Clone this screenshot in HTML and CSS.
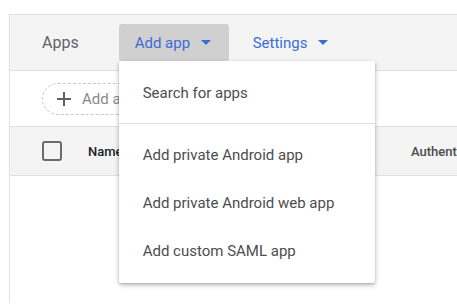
FILE: index.html
```html
<!DOCTYPE html>
<html lang="en">
<head>
  <meta charset="UTF-8" />
  <title>Apps</title>
  <link rel="stylesheet" href="styles.css">
</head>
<body>

  <div class="panel">

    <!-- ───── header bar ───── -->
    <div class="header">
      <span class="title">Apps</span>

      <div class="menu-wrap">
        <button class="drop-btn active">Add app <span class="caret"></span></button>

        <!-- open dropdown -->
        <div class="menu">
          <div class="menu-item">Search for apps</div>
          <div class="menu-divider"></div>
          <div class="menu-item">Add private Android app</div>
          <div class="menu-item">Add private Android web app</div>
          <div class="menu-item">Add custom SAML app</div>
        </div>
      </div>

      <button class="drop-btn">Settings <span class="caret"></span></button>
    </div>

    <!-- ───── toolbar ───── -->
    <div class="toolbar">
      <div class="filter-chip">
        <svg class="plus" width="14" height="14" viewBox="0 0 14 14">
          <path d="M7 0v14M0 7h14" stroke="#616161" stroke-width="2" />
        </svg>
        <span>Add a filter</span>
      </div>
    </div>

    <!-- ───── table header ───── -->
    <div class="table-head">
      <span class="checkbox"></span>
      <span class="col col-name">Name</span>
      <span class="col col-auth">Authentication</span>
    </div>

    <div class="table-body"></div>
  </div>

</body>
</html>
```

FILE: styles.css
```css
:root {
  --c-blue:    #3d6cd6;
  --c-text:    #5f6368;
  --c-menu:    #4d4d4d;
  --c-border:  #e0e0e0;

  --bg-page:   #ffffff;
  --bg-bar:    #f4f4f4;
  --bg-btn:    #d0d0d0;

  --font-base: Roboto, "Liberation Sans", Arial, sans-serif;
}

/* ───── base layout ───── */
body {
  margin: 0;
  padding: 14px 0 0 9px;
  background: var(--bg-page);
  font-family: var(--font-base);
  overflow: hidden;
}

.panel {
  overflow: hidden;
  border-top: 1px solid var(--c-border);
  border-left: 1px solid var(--c-border);
}

/* ───── header bar ───── */
.header {
  display: flex;
  align-items: center;
  height: 55px;
  padding-left: 32px;
  background: var(--bg-bar);
  border-bottom: 1px solid var(--c-border);
}

.title {
  font-size: 16px;
  color: var(--c-text);
  margin-right: 40px;
}

.menu-wrap {
  position: relative;
  margin-right: 8px;
}

.drop-btn {
  display: flex;
  align-items: center;
  height: 37px;
  padding: 0 16px;
  border: none;
  border-radius: 3px;
  background: transparent;
  font-family: var(--font-base);
  font-size: 15px;
  color: var(--c-blue);
}
.drop-btn.active {
  width: 110px;
  background: var(--bg-btn);
}

.caret {
  width: 0;
  height: 0;
  margin-left: 11px;
  border-left: 5px solid transparent;
  border-right: 5px solid transparent;
  border-top: 5px solid var(--c-blue);
}

/* ───── dropdown menu ───── */
.menu {
  position: absolute;
  top: 37px;
  left: 0;
  z-index: 5;
  width: 256px;
  padding: 8px 0;
  background: #ffffff;
  border-radius: 2px;
  box-shadow: 0 2px 5px rgba(0, 0, 0, 0.28), 0 1px 2px rgba(0, 0, 0, 0.12);
}

.menu-item {
  display: flex;
  align-items: center;
  height: 48px;
  padding: 0 24px;
  font-size: 15px;
  color: var(--c-menu);
  white-space: nowrap;
}

.menu-divider {
  height: 1px;
  margin: 6px 0 7px;
  background: var(--c-border);
}

/* ───── toolbar ───── */
.toolbar {
  display: flex;
  align-items: center;
  height: 55px;
  padding-left: 32px;
}

.filter-chip {
  display: flex;
  align-items: center;
  gap: 11px;
  height: 30px;
  padding: 0 14px;
  border: 1px dashed #c8c8c8;
  border-radius: 16px;
  font-size: 15px;
  color: #8a8a8a;
}

/* ───── table header ───── */
.table-head {
  display: flex;
  align-items: center;
  height: 48px;
  padding-left: 32px;
  background: var(--bg-bar);
  border-top: 1px solid var(--c-border);
  border-bottom: 1px solid var(--c-border);
  white-space: nowrap;
}

.checkbox {
  flex: none;
  width: 16px;
  height: 16px;
  border: 2px solid #6b6b6b;
  border-radius: 3px;
  margin-right: 26px;
}

.col {
  font-size: 13px;
  font-weight: 500;
}
.col-name { flex: none; color: #202124; width: 323px; }
.col-auth { color: #4a4a4a; }

.table-body {
  height: 127px;
}
```
